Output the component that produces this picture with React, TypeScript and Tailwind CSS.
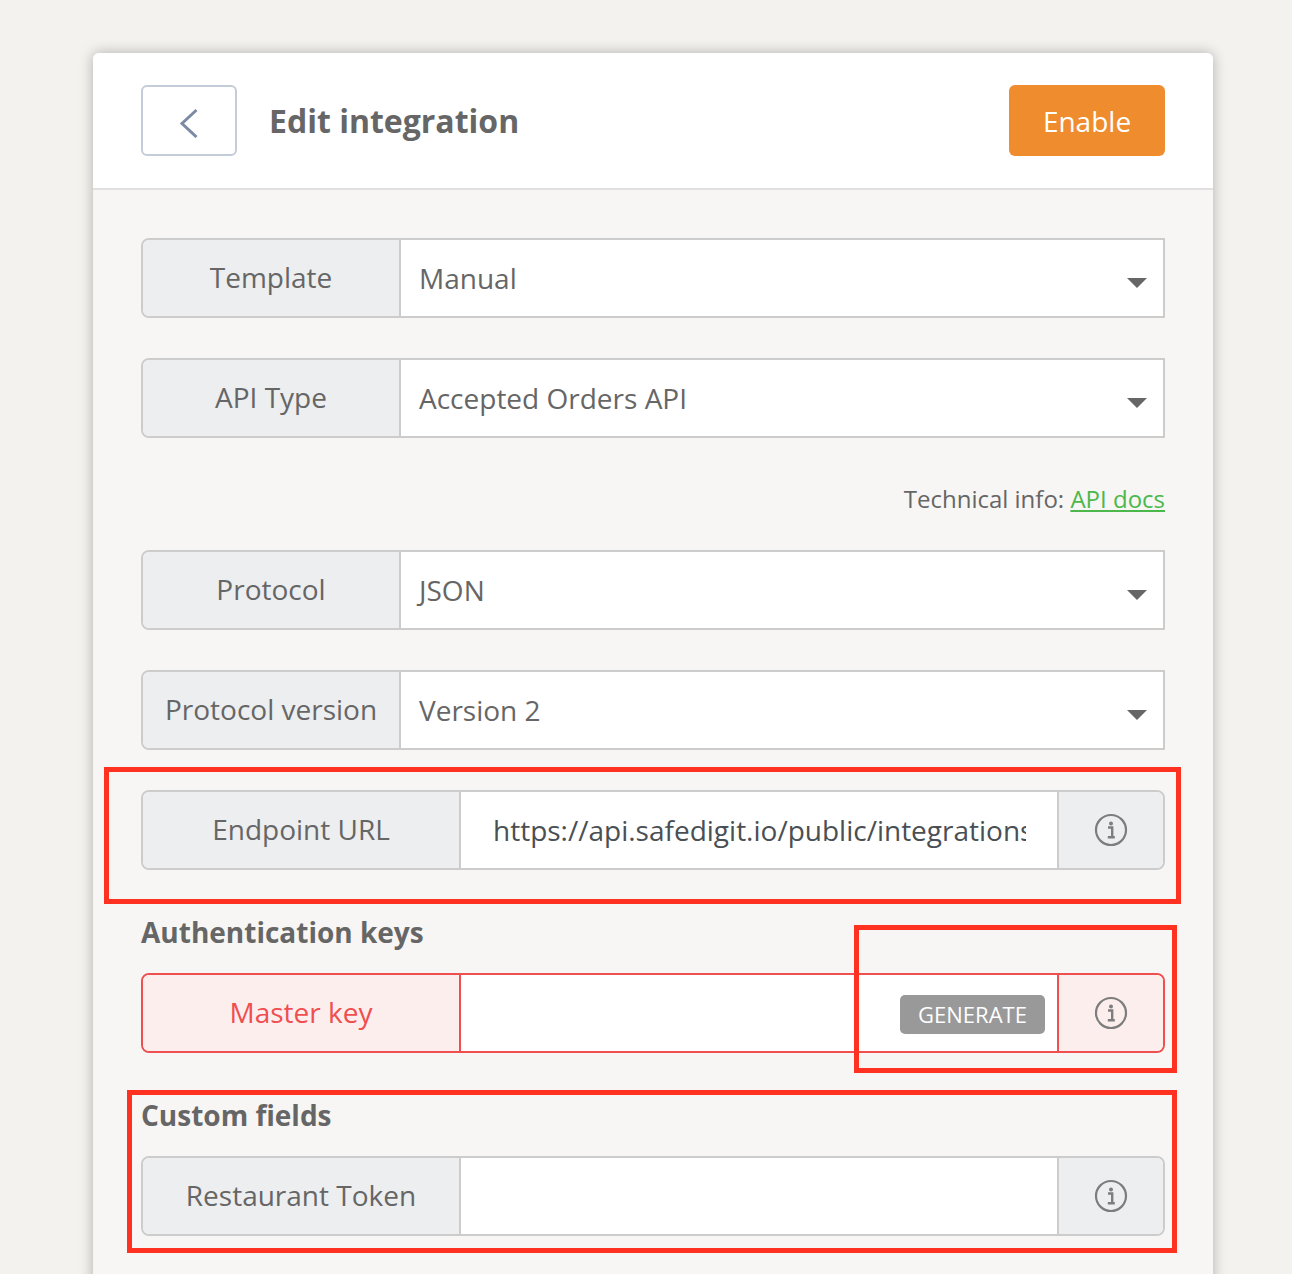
const font = "font-['Open_Sans',sans-serif]"

const InfoIcon = () => (
  <svg width="34" height="34" viewBox="0 0 34 34" fill="none">
    <circle cx="17" cy="17" r="15" stroke="#7d7d7d" strokeWidth="2.2" />
    <circle cx="17" cy="10.5" r="2" fill="#7d7d7d" />
    <path d="M14 14.5h4.2v9.5M13.8 24.2h7" stroke="#7d7d7d" strokeWidth="2.4" />
  </svg>
)

const SelectRow = ({label, value}: {label: string; value: string}) => (
  <div className="flex h-[80px] w-[1024px] border-2 border-[#cccccc] rounded-l-[8px] bg-white">
    <div className="flex w-[258px] shrink-0 items-center justify-center rounded-l-[6px] border-r-2 border-[#cccccc] bg-[#edeef0] pb-[2px] text-[28px] text-[#666666]">
      {label}
    </div>
    <div className="flex flex-1 items-center justify-between pl-[18px] pr-[16px] text-[28px] text-[#666666]">
      <span>{value}</span>
      <span className="mt-[10px] h-0 w-0 border-x-[10px] border-t-[10px] border-x-transparent border-t-[#666666]" />
    </div>
  </div>
)

const InputRow = ({label, error, children}: {label: string; error?: boolean; children?: React.ReactNode}) => (
  <div className={`flex h-[80px] w-[1024px] rounded-[8px] border-2 bg-white ${error ? 'border-[#ef4f4f]' : 'border-[#cccccc]'}`}>
    <div className={`flex w-[318px] shrink-0 items-center justify-center rounded-l-[6px] border-r-2 pb-[2px] text-[28px] ${error ? 'border-[#ef4f4f] bg-[#fdeeee] text-[#ef4f4f]' : 'border-[#cccccc] bg-[#edeef0] text-[#666666]'}`}>
      {label}
    </div>
    <div className="flex min-w-0 flex-1 items-center">{children}</div>
    <div className={`flex w-[106px] shrink-0 items-center justify-center rounded-r-[6px] border-l-2 pb-[1px] ${error ? 'border-[#ef4f4f] bg-[#fdeeee]' : 'border-[#cccccc] bg-[#edeef0]'}`}>
      <InfoIcon />
    </div>
  </div>
)

const Annotation = ({className}: {className: string}) => (
  <div className={`pointer-events-none absolute border-[5px] border-[#ff3120] ${className}`} />
)

const App = () => {
  return (
    <div className={`${font} relative h-[1274px] overflow-hidden bg-[#f3f2ee] pt-[53px] pl-[93px]`}>
      <div className="h-[1400px] w-[1120px] rounded-t-[6px] bg-[#f7f6f4] shadow-[0_0_14px_rgba(0,0,0,0.28)]">
        <div className="flex h-[137px] items-start justify-between rounded-t-[6px] border-b-2 border-[#e0e0e0] bg-white px-[48px] pt-[32px]">
          <div className="flex items-center">
            <button className="flex h-[71px] w-[96px] items-center justify-center rounded-[6px] border-2 border-[#c5ccd9] bg-white">
              <svg className="mt-[4px]" width="20" height="30" viewBox="0 0 20 30" fill="none">
                <path d="M17.5 2 3 15.5 17.5 29" stroke="#7c8ba3" strokeWidth="3" />
              </svg>
            </button>
            <h1 className="ml-[32px] text-[32px] font-bold text-[#666666]">Edit integration</h1>
          </div>
          <button className="h-[71px] w-[156px] rounded-[6px] bg-[#ef8c2e] text-[28px] text-white">Enable</button>
        </div>
        <div className="pl-[48px] pt-[48px]">
          <div className="flex flex-col gap-[40px]">
            <SelectRow label="Template" value="Manual" />
            <SelectRow label="API Type" value="Accepted Orders API" />
          </div>
          <p className="mt-[43px] mb-[33px] h-[36px] w-[1024px] text-right text-[24px] leading-[36px] text-[#666666]">
            Technical info: <a className="text-[#4cb84c] underline">API docs</a>
          </p>
          <div className="flex flex-col gap-[40px]">
            <SelectRow label="Protocol" value="JSON" />
            <SelectRow label="Protocol version" value="Version 2" />
            <InputRow label="Endpoint URL">
              <div className="ml-[32px] w-[533px] overflow-hidden whitespace-nowrap pb-[1px] text-[28px] text-[#4a4f54]">
                https://api.safedigit.io/public/integrations/orders
              </div>
            </InputRow>
          </div>
          <h2 className="mt-[42px] mb-[21px] h-[40px] text-[28px] font-bold leading-[40px] text-[#666666]">Authentication keys</h2>
          <InputRow label="Master key" error>
            <div className="flex w-full justify-end pr-[12px] pt-[3px]">
              <span className="flex h-[39px] w-[145px] items-center justify-center rounded-[5px] bg-[#999999] text-[22px] text-white">GENERATE</span>
            </div>
          </InputRow>
          <h2 className="mt-[42px] mb-[21px] h-[40px] text-[28px] font-bold leading-[40px] text-[#666666]">Custom fields</h2>
          <InputRow label="Restaurant Token" />
        </div>
      </div>
      <Annotation className="left-[104px] top-[767px] h-[137px] w-[1077px]" />
      <Annotation className="left-[854px] top-[925px] h-[148px] w-[323px]" />
      <Annotation className="left-[127px] top-[1090px] h-[163px] w-[1050px]" />
    </div>
  )
}

export default App
